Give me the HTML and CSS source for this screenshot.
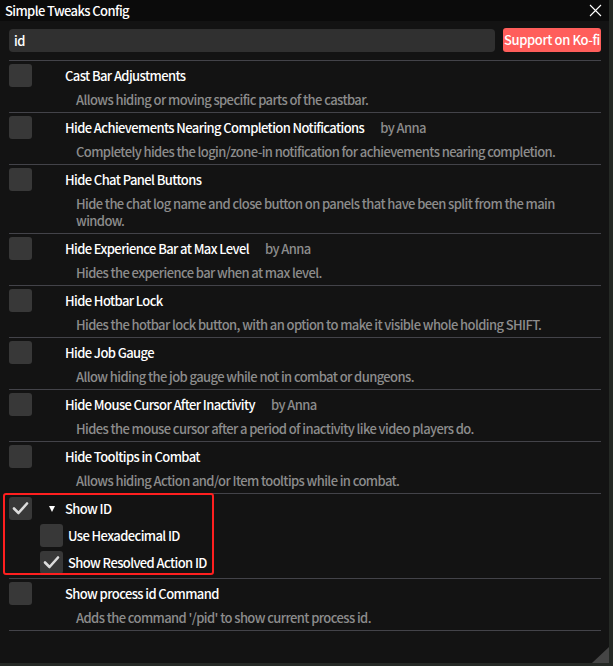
FILE: index.html
```html
<!DOCTYPE html>
<html>
<head>
<meta charset="utf-8">
<title>Simple Tweaks Config</title>
<link rel="stylesheet" href="styles.css">
</head>
<body>
<div class="window">
  <div class="titlebar">
    <span class="title">Simple Tweaks Config</span>
    <svg class="close" width="13" height="13" viewBox="0 0 13 13"><path d="M1 1 L12 12 M12 1 L1 12" stroke="#ffffff" stroke-width="1.1" fill="none"/></svg>
  </div>
  <div class="content">
    <div class="toolbar">
      <div class="search">id</div>
      <div class="kofi">Support on Ko-fi</div>
    </div>
    <div class="list">
      <div class="row">
        <div class="head"><span class="cb"></span><span class="name">Cast Bar Adjustments</span></div>
        <div class="desc">Allows hiding or moving specific parts of the castbar.</div>
      </div>
      <div class="row">
        <div class="head"><span class="cb"></span><span class="name">Hide Achievements Nearing Completion Notifications</span><span class="author">by Anna</span></div>
        <div class="desc">Completely hides the login/zone-in notification for achievements nearing completion.</div>
      </div>
      <div class="row">
        <div class="head"><span class="cb"></span><span class="name">Hide Chat Panel Buttons</span></div>
        <div class="desc">Hide the chat log name and close button on panels that have been split from the main window.</div>
      </div>
      <div class="row">
        <div class="head"><span class="cb"></span><span class="name">Hide Experience Bar at Max Level</span><span class="author">by Anna</span></div>
        <div class="desc">Hides the experience bar when at max level.</div>
      </div>
      <div class="row">
        <div class="head"><span class="cb"></span><span class="name">Hide Hotbar Lock</span></div>
        <div class="desc">Hides the hotbar lock button, with an option to make it visible whole holding SHIFT.</div>
      </div>
      <div class="row">
        <div class="head"><span class="cb"></span><span class="name">Hide Job Gauge</span></div>
        <div class="desc">Allow hiding the job gauge while not in combat or dungeons.</div>
      </div>
      <div class="row">
        <div class="head"><span class="cb"></span><span class="name">Hide Mouse Cursor After Inactivity</span><span class="author">by Anna</span></div>
        <div class="desc">Hides the mouse cursor after a period of inactivity like video players do.</div>
      </div>
      <div class="row">
        <div class="head"><span class="cb"></span><span class="name">Hide Tooltips in Combat</span></div>
        <div class="desc">Allows hiding Action and/or Item tooltips while in combat.</div>
      </div>
      <div class="row group">
        <div class="head">
          <span class="cb on"><svg width="23" height="23" viewBox="0 0 23 23"><path d="M5 11.5 L9.5 16 L18 6.5" stroke="#dcdcdc" stroke-width="2.6" fill="none" stroke-linecap="round" stroke-linejoin="round"/></svg></span>
          <span class="tri"></span>
          <span class="name group-name">Show ID</span>
        </div>
        <div class="sub"><span class="cb"></span><span class="label">Use Hexadecimal ID</span></div>
        <div class="sub"><span class="cb on"><svg width="23" height="23" viewBox="0 0 23 23"><path d="M5 11.5 L9.5 16 L18 6.5" stroke="#dcdcdc" stroke-width="2.6" fill="none" stroke-linecap="round" stroke-linejoin="round"/></svg></span><span class="label">Show Resolved Action ID</span></div>
        <div class="highlight"></div>
      </div>
      <div class="row">
        <div class="head"><span class="cb"></span><span class="name">Show process id Command</span></div>
        <div class="desc">Adds the command '/pid' to show current process id.</div>
      </div>
    </div>
  </div>
  <div class="grip"></div>
</div>
</body>
</html>
```

FILE: styles.css
```css
* { box-sizing: border-box; }
html, body { margin: 0; padding: 0; }
body {
  width: 613px;
  height: 666px;
  background: #252925;
  font-family: "Noto Sans CJK JP", "Noto Sans", sans-serif;
  font-size: 13px;
  letter-spacing: -0.6px;
  font-weight: 500;
  color: #ffffff;
  overflow: hidden;
}
.window {
  position: relative;
  width: 609px;
  height: 663px;
  background: #131313;
  display: flex;
  flex-direction: column;
}
.titlebar {
  height: 21px;
  background: #0b0b0b;
  display: flex;
  align-items: center;
  justify-content: space-between;
  padding: 0 7px 0 5px;
}
.title { line-height: 21px; }
.close { display: block; margin-top: -1px; }
.content {
  padding: 8px 8px 0 9px;
  flex: 1;
}
.toolbar {
  display: flex;
  gap: 8px;
  height: 23px;
  margin-bottom: 8px;
}
.search {
  flex: 1;
  background: #303030;
  border-radius: 4px;
  padding: 0 5px;
  line-height: 23px;
}
.kofi {
  width: 98px;
  background: #ff5e5b;
  border-radius: 3px;
  text-align: center;
  white-space: nowrap;
  letter-spacing: -0.4px;
  line-height: 24px;
  margin-top: -1px;
  height: 24px;
}
.row {
  border-top: 1px solid #434349;
  padding: 3px 0 4px;
}
.row:last-child { border-bottom: 1px solid #434349; }
.head {
  display: flex;
  align-items: center;
  height: 23px;
}
.cb {
  width: 23px;
  height: 23px;
  background: #383838;
  border-radius: 3px;
  flex: none;
}
.cb svg { display: block; }
.name { margin-left: 33px; white-space: nowrap; }
.author { margin-left: 16px; color: #8c8c8c; }
.desc {
  margin-top: 4px;
  padding-left: 67px;
  line-height: 17px;
  color: #8c8c8c;
}
.group { position: relative; }
.tri {
  margin-left: 17px;
  width: 0;
  height: 0;
  border-left: 3.5px solid transparent;
  border-right: 3.5px solid transparent;
  border-top: 6px solid #ffffff;
}
.group-name { margin-left: 10px; }
.sub {
  display: flex;
  align-items: center;
  height: 23px;
  margin-top: 4px;
  padding-left: 31px;
}
.label { margin-left: 5px; }
.highlight {
  position: absolute;
  left: -6px;
  top: -1px;
  width: 211px;
  height: 82px;
  border: 2px solid #ff1f1f;
  border-radius: 3px;
}
.grip {
  position: absolute;
  right: 0;
  bottom: 0;
  width: 17px;
  height: 16px;
  background: #454545;
  clip-path: polygon(100% 0, 100% 100%, 0 100%);
}
```
